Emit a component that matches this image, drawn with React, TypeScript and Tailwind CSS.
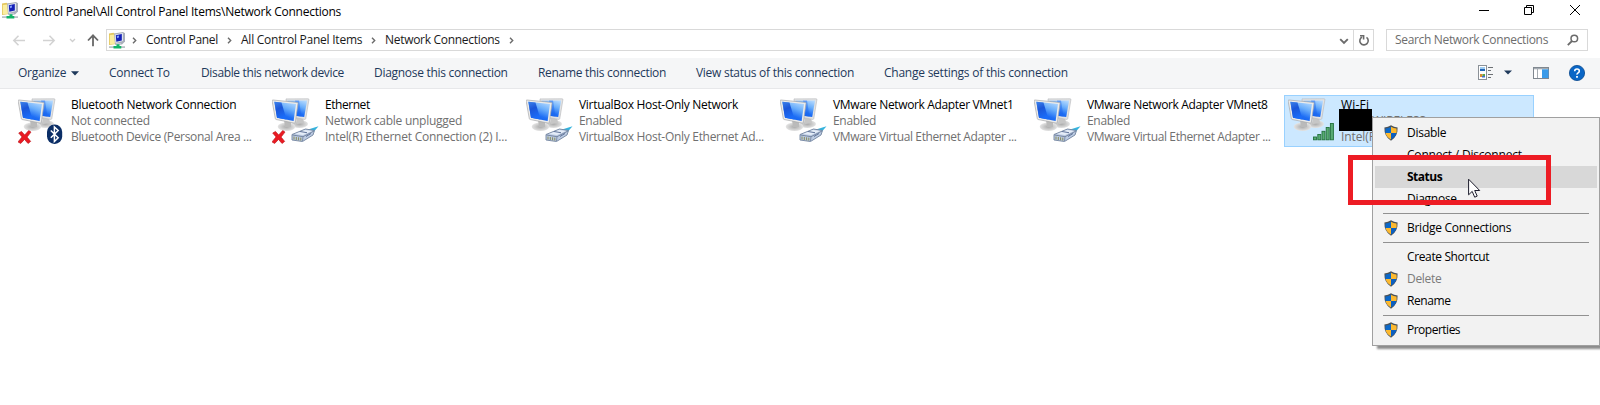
import React from 'react';

const FONT = "font-['Open_Sans','Noto_Sans',sans-serif]";

function FolderIcon() {
  return (
    <svg width="16" height="17" viewBox="0 0 16 17" className="shrink-0">
      <path d="M0 1.500 4.500.8l1 1H9v10L0 13z" fill="#e3c65e" />
      <path d="M.8 3 6 2.500v9.200L.8 12.200z" fill="#fbee9f" />
      <path d="M5 1.500 14 0l2 1.200v8.300l-3 3-7 .2z" fill="#a9afbb" />
      <path d="M5.800 2.500 14 1v8L6.500 11z" fill="#dfe4ef" />
      <path d="M6.800 3.300 12.800 2v6.500L7.300 9.800z" fill="#1420b8" />
      <path d="M7.800 4 10 3.400v2.200L8 6.200z" fill="#7f9bf8" />
      <path d="M7 11h5v1.500H7z" fill="#c3c7ce" />
      <path d="M0 14.300h16v1.600H0z" fill="#b4bac0" />
      <path d="M7.500 12.300h3V14h1.800v2.500H4.500V14h3z" fill="#12b466" />
    </svg>
  );
}

function Crumb({ className, children }: { className: string; children: string }) {
  return <span className={`shrink-0 whitespace-pre text-[#1a1a1a] ${className}`}>{children}</span>;
}

function Sep({ className }: { className: string }) {
  return (
    <svg width="5" height="7" viewBox="0 0 5 7" className={`shrink-0 ${className}`}>
      <path d="M1 .8 3.7 3.5 1 6.2" fill="none" stroke="#6b6b6b" strokeWidth="1.4" />
    </svg>
  );
}

function Monitors({ id }: { id: string }) {
  return (
    <>
      <defs>
        <linearGradient id={`s${id}`} x1="0.900" y1="0" x2="0.450" y2="1">
          <stop offset="0" stopColor="#b9dcff" />
          <stop offset=".4" stopColor="#6aaefb" />
          <stop offset=".75" stopColor="#1f6ff5" />
          <stop offset="1" stopColor="#1160ee" />
        </linearGradient>
        <linearGradient id={`w${id}`} x1="0" y1="0" x2="0.300" y2="1">
          <stop offset="0" stopColor="#3f83ea" />
          <stop offset=".45" stopColor="#1b56d8" />
          <stop offset="1" stopColor="#1a6cf8" />
        </linearGradient>
        <radialGradient id={`b${id}`}>
          <stop offset="0" stopColor="#a9a9a9" />
          <stop offset=".6" stopColor="#cdcdcd" />
          <stop offset="1" stopColor="#e4e4e4" />
        </radialGradient>
      </defs>
      <ellipse cx="27.500" cy="26" rx="8.500" ry="4" fill={`url(#b${id})`} />
      <path d="m24 20 7-1 1 6-7 1z" fill="#c6c6c6" />
      <path d="M14 .9 36.200.8q.8 0 .7.900L33.800 20.500q-.2 1-1.200.9L15 18z" fill="#e2e3e4" stroke="#b4b6b9" strokeWidth=".6" />
      <path d="m15.500 2.700 19.600-.3L32.200 19 17 17z" fill={`url(#s${id})`} />
      <path d="m23 2.600 4-.1 2.500 16.200-3-.4z" fill="#1f66ea" opacity=".45" />
      <ellipse cx="14.500" cy="28.800" rx="8.800" ry="4.200" fill={`url(#b${id})`} />
      <path d="m12 22 7 1v6h-6z" fill="#bababa" />
      <path d="M.9 2 25.200 4.400q.9.100.8 1L23.300 24.300q-.2 1-1.100.8L4.200 21.500q-.8-.2-.9-1L.1 2.900Q0 2 .9 2Z" fill="#ececeb" stroke="#a6a8aa" strokeWidth=".7" />
      <path d="M2.300 3.700 24 6 21.600 22.900 5 19.700Z" fill={`url(#s${id})`} />
      <path d="M2.300 3.700 9.500 4.500 14.500 21.500 5 19.700Z" fill={`url(#w${id})`} />
    </>
  );
}

function RedCross() {
  return (
    <path
      d="M1.200 35.300 4 33.700l3.200 3.600 4-4.500 2.300 1.600-3.900 5 3.600 4.300-2.700 2.100-3.500-4.100-3.800 4.100-2.700-1.600 4-5z"
      fill="#ea1a22"
      stroke="#b80f16"
      strokeWidth=".6"
    />
  );
}

function Plug() {
  return (
    <g strokeLinejoin="round">
      <path d="M36 31.500 46.500 28.300 42 33.500l-4 1.500z" fill="#35b3dd" />
      <path d="M20 36.500 33.500 31l9 1.500-1.500 4.500L30.500 43.500 20 42z" fill="#bccbe2" stroke="#73849f" strokeWidth=".9" />
      <path d="M20.500 37 31 38.700 42 33" fill="none" stroke="#6e7f9b" strokeWidth=".9" />
      <path d="m23 36 10-4 7 1.100-9 4z" fill="#e5edf8" />
      <path d="M31 38.700 30.500 43" stroke="#6e7f9b" strokeWidth=".8" />
      <path d="M22 38.500v3M24.300 39v3M26.600 39.300v3M28.800 39.600v3" stroke="#878b5c" strokeWidth="1" />
      <path d="m34 38.500 5-3M28 33.500l7 1.200" stroke="#60749a" strokeWidth="1" />
    </g>
  );
}

function Bluetooth() {
  return (
    <g>
      <rect x="29" y="26.500" width="15.200" height="19.500" rx="7.400" fill="#0b2e66" />
      <path d="m32.800 32.500 7.400 7.300-3.800 3.700V29l3.800 3.500-7.400 7.300" fill="none" stroke="#fff" strokeWidth="1.500" />
    </g>
  );
}

function Signal() {
  return (
    <g fill="#58ab73" stroke="#23713d" strokeWidth=".9">
      <rect x="25.500" y="39" width="3" height="2.800" />
      <rect x="29.800" y="36.500" width="3" height="5.300" />
      <rect x="34" y="33.300" width="3" height="8.500" />
      <rect x="38.200" y="29.500" width="3" height="12.300" />
      <rect x="42.400" y="25.500" width="3" height="16.300" />
    </g>
  );
}

type Item = {
  id: string;
  name: string;
  status: string;
  device: string;
  tn: string;
  ts: string;
  td: string;
  badge: 'bt' | 'off' | 'on' | 'wifi';
};

const items: Item[] = [
  { id: 'a', name: 'Bluetooth Network Connection', status: 'Not connected', device: 'Bluetooth Device (Personal Area ...', tn: 'tracking-[-0.28px]', ts: 'tracking-[-0.25px]', td: 'tracking-[-0.34px]', badge: 'bt' },
  { id: 'b', name: 'Ethernet', status: 'Network cable unplugged', device: 'Intel(R) Ethernet Connection (2) I...', tn: 'tracking-[-0.45px]', ts: 'tracking-[-0.26px]', td: 'tracking-[-0.23px]', badge: 'off' },
  { id: 'c', name: 'VirtualBox Host-Only Network', status: 'Enabled', device: 'VirtualBox Host-Only Ethernet Ad...', tn: 'tracking-[-0.3px]', ts: 'tracking-[-0.3px]', td: 'tracking-[-0.3px]', badge: 'on' },
  { id: 'd', name: 'VMware Network Adapter VMnet1', status: 'Enabled', device: 'VMware Virtual Ethernet Adapter ...', tn: 'tracking-[-0.35px]', ts: 'tracking-[-0.3px]', td: 'tracking-[-0.39px]', badge: 'on' },
  { id: 'e', name: 'VMware Network Adapter VMnet8', status: 'Enabled', device: 'VMware Virtual Ethernet Adapter ...', tn: 'tracking-[-0.35px]', ts: 'tracking-[-0.3px]', td: 'tracking-[-0.39px]', badge: 'on' },
  { id: 'f', name: 'Wi-Fi', status: '', device: 'Intel(R)', tn: 'tracking-[0.2px]', ts: '', td: 'tracking-[-0.1px]', badge: 'wifi' },
];

function Connection({ item }: { item: Item }) {
  const wifi = item.badge === 'wifi';
  return (
    <div className={`flex h-[52px] w-[250px] shrink-0 border ${wifi ? 'border-[#99d1ff] bg-[#cce8ff]' : 'border-transparent'}`}>
      <svg width="48" height="48" viewBox="0 0 48 48" className="ml-[3px] mt-[2px] shrink-0">
        <Monitors id={item.id} />
        {(item.badge === 'bt' || item.badge === 'off') && <g transform="translate(-.5 -.3)"><RedCross /></g>}
        {item.badge === 'bt' && <Bluetooth />}
        {(item.badge === 'off' || item.badge === 'on') && <Plug />}
        {wifi && <Signal />}
      </svg>
      <div className="ml-[5px] mt-px whitespace-pre leading-4 text-[#707070]">
        <div className={`text-black ${item.tn}`}>{item.name}</div>
        {wifi ? (
          <div className="flex h-4 items-start">
            <div className="relative -ml-[2px] mt-[-4px] h-[22px] w-[33px] bg-black" />
            <span className="tracking-[-0.1px]">WIRELESS</span>
          </div>
        ) : (
          <div className={item.ts}>{item.status}</div>
        )}
        <div className={item.td}>{item.device}</div>
      </div>
    </div>
  );
}

function Shield() {
  return (
    <svg width="14" height="16" viewBox="0 0 14 16" className="block">
      <path d="M7 .3Q9.800 2.200 13.600 2.500 14 11.500 7 15.700 0 11.500.4 2.500 4.200 2.200 7 .3Z" fill="#4b5258" />
      <path d="M7 1.800V8H1.500Q1.200 5.500 1.500 3.500 4.500 3.300 7 1.800Z" fill="#0b68c9" />
      <path d="M7 1.800V8h5.500q.3-2.500 0-4.500Q9.500 3.300 7 1.800Z" fill="#fdb92f" />
      <path d="M7 8H1.600Q2.500 12 7 14.500Z" fill="#fdb92f" />
      <path d="M7 8h5.400Q11.500 12 7 14.500Z" fill="#0b5fc0" />
    </svg>
  );
}

function MenuRow({ label, shield, className = 'tracking-[-0.27px]' }: { label: string; shield?: boolean; className?: string }) {
  return (
    <div className={`mx-[2px] flex h-[22px] items-center ${className}`}>
      <div className="ml-[9px] w-[23px]">{shield && <Shield />}</div>
      <span className="whitespace-pre leading-4">{label}</span>
    </div>
  );
}

function MenuLine() {
  return (
    <div className="flex h-[7px] items-center pl-[10px] pr-[10px]">
      <div className="h-px grow bg-[#919191]" />
    </div>
  );
}

export default function App() {
  return (
    <div className={`relative h-[405px] w-[1600px] overflow-hidden bg-white text-[12px] text-black ${FONT}`}>
      <div className="flex h-[29px] items-start">
        <div className="ml-[2px] mt-[2px]"><FolderIcon /></div>
        <span className="ml-[5px] mt-[4px] whitespace-pre leading-4 tracking-[-0.24px]">Control Panel\All Control Panel Items\Network Connections</span>
        <svg width="104" height="14" viewBox="0 0 104 14" className="ml-auto mr-[18px] mt-[3px]" fill="none" stroke="#000" strokeWidth="1">
          <path d="M1 7.500h10" />
          <path d="M46.500 4.500h7v7h-7zM48.500 4V2.500h7v7H54" />
          <path d="m92 2 10 10M102 2 92 12" />
        </svg>
      </div>

      <div className="flex h-[22px] items-center">
        <svg width="93" height="16" viewBox="0 0 93 16" className="ml-[12px] shrink-0" fill="none">
          <path d="M13 8.500H2M6.500 3.700 1.800 8.500l4.700 4.800M31 8.500h11M37.500 3.700l4.700 4.800-4.700 4.800" stroke="#d2d2d2" strokeWidth="1.500" />
          <path d="m58 7 2.500 2.500L63 7" stroke="#cfcfcf" strokeWidth="1.300" />
          <path d="M81 14.200V3.500M76 8.500l5-5.200 5 5.200" stroke="#686868" strokeWidth="1.800" />
        </svg>
        <div className="ml-[1px] flex h-[22px] w-[1268px] shrink-0 items-center border border-[#d9d9d9]">
          <div className="ml-[2px]"><FolderIcon /></div>
          <Sep className="ml-[7px]" />
          <Crumb className="ml-[9px] w-[72px] tracking-[-0.28px]">Control Panel</Crumb>
          <Sep className="ml-[9px]" />
          <Crumb className="ml-[9px] w-[122px] tracking-[-0.24px]">All Control Panel Items</Crumb>
          <Sep className="ml-[8px]" />
          <Crumb className="ml-[9px] w-[116px] tracking-[-0.3px]">Network Connections</Crumb>
          <Sep className="ml-[8px]" />
          <svg width="10" height="7" viewBox="0 0 10 7" className="ml-auto mr-[4px] mt-[2px]">
            <path d="m1.200 1.200 3.800 3.800 3.800-3.800" fill="none" stroke="#6b6b6b" strokeWidth="1.900" />
          </svg>
          <div className="flex h-[20px] w-[20px] items-center justify-center border-l border-[#d9d9d9]">
            <svg width="12" height="12" viewBox="0 0 12 12" fill="none" stroke="#6b6b6b" strokeWidth="1.600">
              <path d="M8.500 3.300A4.200 4.200 0 1 1 4 3" />
              <path d="M2 1.800h3.600v3.800" />
            </svg>
          </div>
        </div>
        <div className="ml-[12px] flex h-[22px] w-[202px] shrink-0 items-center border border-[#d9d9d9]">
          <span className="ml-[8px] whitespace-pre leading-4 tracking-[-0.33px] text-[#6d6d6d]">Search Network Connections</span>
          <svg width="12" height="12" viewBox="0 0 12 12" className="ml-auto mr-[8px]" fill="none" stroke="#6b6b6b">
            <circle cx="7.300" cy="4.500" r="3.300" strokeWidth="1.500" />
            <path d="M5 7 .8 11.200" strokeWidth="1.800" />
          </svg>
        </div>
      </div>

      <div className="mt-[7px] flex h-[31px] items-center whitespace-pre border-b border-[#e7e8ea] bg-[#f5f6f7] text-[#1e395b]">
        <span className="ml-[18px] w-[53px] tracking-[-0.25px]">Organize</span>
        <svg width="8" height="5" viewBox="0 0 8 5"><path d="M0 .3h8L4 4.500z" fill="#1e395b" /></svg>
        <span className="ml-[30px] w-[92px] tracking-[-0.25px]">Connect To</span>
        <span className="w-[173px] tracking-[-0.36px]">Disable this network device</span>
        <span className="w-[164px] tracking-[-0.29px]">Diagnose this connection</span>
        <span className="w-[158px] tracking-[-0.3px]">Rename this connection</span>
        <span className="w-[188px] tracking-[-0.28px]">View status of this connection</span>
        <span className="tracking-[-0.24px]">Change settings of this connection</span>
        <svg width="108" height="18" viewBox="0 0 108 18" className="ml-auto mr-[14px]">
          <rect x=".5" y="1.500" width="8" height="14" fill="#fff" stroke="#8b9197" />
          <path d="M2 3h5v2H2z" fill="#9fcdf2" /><path d="M2 5h5v2H2z" fill="#2265b5" />
          <path d="M2 10h2.500v3H2z" fill="#d98b33" /><path d="M4.500 10H7v2H4.500z" fill="#5aa548" /><path d="M4 12h3v1.500H4z" fill="#436ccf" />
          <path d="M10 3.500h5M10 6.500h3M10 10.500h5M10 13.500h3" stroke="#6d7175" />
          <path d="M26 6.500h8L30 10.500z" fill="#1e395b" />
          <rect x="55.500" y="3.500" width="15" height="11" fill="#fff" stroke="#808890" />
          <path d="M56 4h14v1.300H56z" fill="#a4abb2" /><path d="M59.500 5v9" stroke="#a6acb2" />
          <path d="M64 5.300h6.500V14H64z" fill="#3b9be9" />
          <circle cx="99" cy="9" r="7.600" fill="#0a66c6" stroke="#07498f" strokeWidth=".8" />
          <path d="M96.700 7.200q0-2.200 2.300-2.200t2.300 2q0 1.100-1.200 1.900T99 10.600" fill="none" stroke="#fff" strokeWidth="1.600" />
          <path d="M98.100 12h1.800v1.700h-1.800z" fill="#fff" />
        </svg>
      </div>

      <div className="ml-[14px] mt-[6px] flex gap-[4px]">
        {items.map((item) => <Connection key={item.id} item={item} />)}
      </div>

      <div className="absolute left-[1372px] top-[117px] h-[229px] w-[228px] border border-[#a0a0a0] bg-[#f2f2f2] pt-[4px] shadow-[4px_4px_2px_-1px_rgba(0,0,0,0.45)]">
        <MenuRow label="Disable" shield />
        <MenuRow label="Connect / Disconnect" className="tracking-[-0.2px]" />
        <MenuRow label="Status" className="bg-[#d8d8d8] font-bold tracking-[-0.5px]" />
        <MenuRow label="Diagnose" />
        <MenuLine />
        <MenuRow label="Bridge Connections" shield />
        <MenuLine />
        <MenuRow label="Create Shortcut" className="tracking-[-0.37px]" />
        <MenuRow label="Delete" shield className="tracking-[-0.3px] text-[#7a7a7a]" />
        <MenuRow label="Rename" shield className="tracking-[-0.4px]" />
        <MenuLine />
        <MenuRow label="Properties" shield className="tracking-[-0.5px]" />
      </div>

      <div className="absolute left-[1348px] top-[155px] h-[50px] w-[203px] border-[5px] border-[#ed1c24]" />
      <svg width="13" height="21" viewBox="0 0 13 21" className="absolute left-[1468px] top-[178px]">
        <path d="M.6 1.200v15.600l3.600-3.400 2.500 5.800 2.500-1.100-2.500-5.600h5z" fill="#fff" stroke="#1b1b2b" strokeWidth="1" />
      </svg>
    </div>
  );
}
